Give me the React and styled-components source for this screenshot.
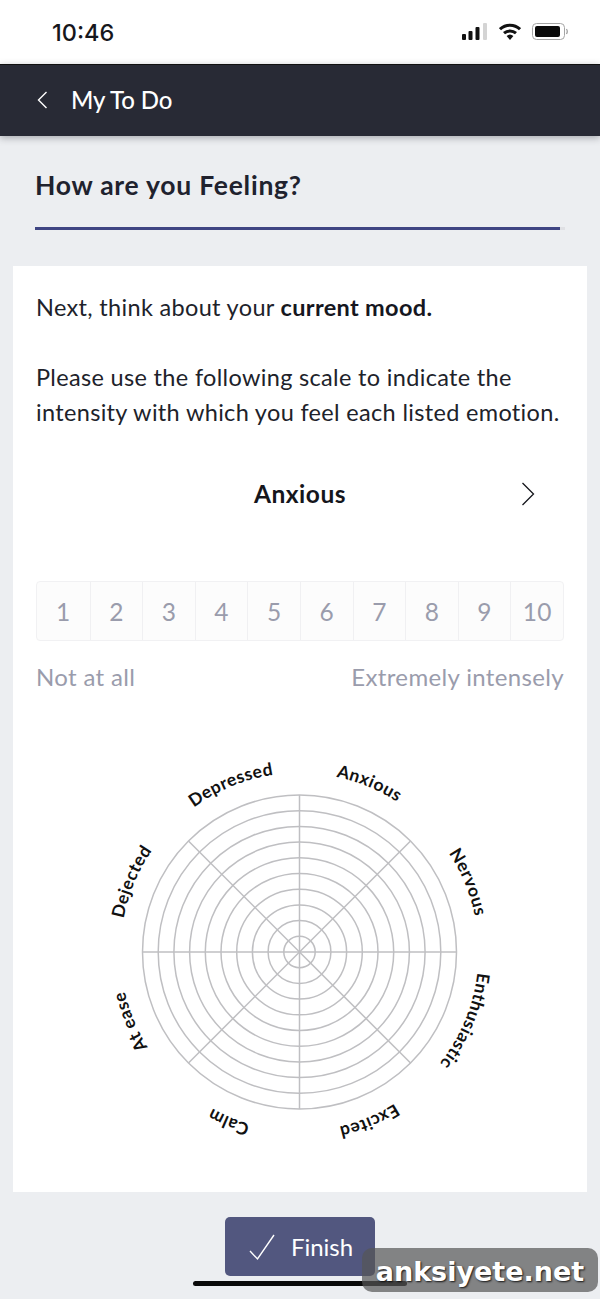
import React from "react";
import styled, { createGlobalStyle } from "styled-components";

const Global = createGlobalStyle`
  html, body { margin: 0; padding: 0; background: #eceef1; }
  body { font-family: "Lato", "Open Sans", sans-serif; }
`;

const Page = styled.div`
  position: relative;
  width: 600px;
  height: 1299px;
  overflow: hidden;
  background: #eceef1;
  display: flex;
  flex-direction: column;
`;
const StatusBar = styled.div`
  height: 64px;
  background: #fff;
  display: flex;
  align-items: center;
  justify-content: space-between;
  padding: 0 32px 0 52px;
  box-sizing: border-box;
`;
const Clock = styled.span`
  font-family: "Inter", sans-serif;
  font-size: 23.5px;
  font-weight: 500;
  color: #16171c;
`;
const StatusIcons = styled.div`
  display: flex;
  align-items: center;
  gap: 11px;
`;
const Header = styled.header`
  height: 72px;
  background: #282a35;
  box-shadow: 0 2px 7px rgba(40, 42, 53, 0.35);
  border-top: 1px solid #111;
  box-sizing: border-box;
  display: flex;
  align-items: center;
  gap: 20px;
  padding: 0 0 2px 35px;
  color: #fff;
  position: relative;
`;
const HeaderTitle = styled.span`
  font-size: 24px;
  font-weight: 500;
  letter-spacing: -0.1px;
`;
const TitleBlock = styled.div`
  padding: 33px 35px 0;
  height: 130px;
  box-sizing: border-box;
`;
const Title = styled.h1`
  margin: 0;
  font-size: 26.5px;
  line-height: 32px;
  font-weight: 700;
  letter-spacing: 0.75px;
  color: #20222e;
`;
const Track = styled.div`
  margin-top: 26px;
  width: 530px;
  height: 3px;
  background: #dfe0e4;
`;
const Fill = styled.div`
  height: 100%;
  background: #3f4583;
`;
const Card = styled.main`
  margin: 0 13px;
  height: 926px;
  background: #fff;
  box-sizing: border-box;
  padding: 24px 23px 0 23px;
  display: flex;
  flex-direction: column;
`;
const Para = styled.p`
  margin: 0 0 ${(p) => p.$after || 0}px;
  font-size: 23.5px;
  line-height: 35px;
  color: #20222a;
  letter-spacing: 0.33px;
  white-space: nowrap;
  strong { font-weight: 700; color: #16171f; }
`;
const EmotionRow = styled.div`
  margin-top: 41px;
  height: 44px;
  display: flex;
  align-items: center;
  justify-content: center;
  position: relative;
`;
const Emotion = styled.span`
  font-size: 24.5px;
  font-weight: 700;
  letter-spacing: 0.5px;
  color: #15161c;
`;
const NextBtn = styled.span`
  position: absolute;
  right: 28px;
  top: 10px;
  display: flex;
`;
const Scale = styled.div`
  margin-top: 66px;
  display: grid;
  grid-template-columns: repeat(10, 1fr);
  height: 60px;
  border: 1px solid #f1f1f3;
  border-radius: 4px;
  background: #fcfcfc;
  box-sizing: border-box;
`;
const Cell = styled.div`
  display: flex;
  align-items: center;
  justify-content: center;
  font-size: 24.5px;
  color: #9a9cac;
  letter-spacing: 0.3px;
  & + & { border-left: 1px solid #f0f0f2; }
`;
const ScaleLabels = styled.div`
  margin-top: 18px;
  display: flex;
  justify-content: space-between;
  font-size: 24px;
  line-height: 36px;
  color: #9a9cac;
  letter-spacing: 0.35px;
`;
const ChartWrap = styled.div`
  margin-top: 52px;
  display: flex;
  justify-content: center;
`;
const Footer = styled.div`
  margin-top: 25px;
  display: flex;
  justify-content: center;
`;
const FinishButton = styled.button`
  margin-right: 1px;
  width: 150px;
  height: 59px;
  border: 0;
  border-radius: 5px;
  background: #52577f;
  color: #fff;
  font-family: inherit;
  font-size: 24px;
  letter-spacing: 0;
  display: flex;
  align-items: center;
  justify-content: center;
  gap: 15px;
  padding: 0 0 0 2px;
`;
const HomeBar = styled.div`
  position: absolute;
  left: 193px;
  top: 1281px;
  width: 214px;
  height: 5px;
  border-radius: 3px;
  background: #0a0a0a;
`;
const Watermark = styled.div`
  position: absolute;
  left: 362px;
  top: 1248px;
  width: 236px;
  height: 44px;
  border-radius: 10px;
  background: rgba(85, 85, 85, 0.7);
  display: flex;
  align-items: center;
  justify-content: center;
  padding-top: 3px;
  box-sizing: border-box;
  font-family: "DejaVu Sans", sans-serif;
  font-weight: 700;
  font-size: 27px;
  color: #fff;
  text-shadow: 1px 1px 2px rgba(0, 0, 0, 0.85);
`;

const SignalWifiBattery = () => (
  <StatusIcons>
    <svg width="26" height="18" viewBox="0 0 26 18">
      <rect x="0" y="11" width="4" height="6" rx="1" fill="#111" />
      <rect x="6.5" y="8" width="4" height="9" rx="1" fill="#111" />
      <rect x="13.5" y="4" width="4" height="13" rx="1" fill="#111" />
      <rect x="21" y="0" width="4" height="17" rx="1" fill="#d4d4d4" />
    </svg>
    <svg width="22" height="18" viewBox="0 0 22 18">
      <path d="M1 6.2 A14.5 14.5 0 0 1 21 6.2" fill="none" stroke="#111" strokeWidth="3" />
      <path d="M5 10.2 A9 9 0 0 1 17 10.2" fill="none" stroke="#111" strokeWidth="3" />
      <path d="M7.6 13 A5 5 0 0 1 14.4 13 L11 17 Z" fill="#111" />
    </svg>
    <svg width="36" height="18" viewBox="0 0 36 18">
      <rect x="0.5" y="0.5" width="32" height="16" rx="4" fill="none" stroke="#a5a5a5" />
      <rect x="3" y="3" width="25" height="11" rx="2" fill="#0a0a0a" />
      <path d="M34.5 6 Q36 8.5 34.5 11" fill="none" stroke="#999" strokeWidth="1.2" />
    </svg>
  </StatusIcons>
);

const labels = ["Anxious", "Nervous", "Enthusiastic", "Excited", "Calm", "At ease", "Dejected", "Depressed"];
const C = 209.5;
const CY = 205;
const LABEL_R = 179;
const circumference = 2 * Math.PI * LABEL_R;
const rings = Array.from({ length: 10 }, (_, i) => 15.7 * (i + 1));
const spokes = Array.from({ length: 8 }, (_, i) => (i * Math.PI) / 4);

const Wheel = () => (
  <svg width="420" height="410" viewBox="0 0 420 410">
    <defs>
      <path
        id="labelCircle"
        d={`M ${C} ${CY - LABEL_R} A ${LABEL_R} ${LABEL_R} 0 1 1 ${C - 0.01} ${CY - LABEL_R} Z`}
      />
    </defs>
    {rings.map((r) => (
      <circle key={r} cx={C} cy={CY} r={r} fill="none" stroke="#bfbfc2" strokeWidth="1.5" />
    ))}
    {spokes.map((a) => (
      <line
        key={a}
        x1={C}
        y1={CY}
        x2={C + 157 * Math.sin(a)}
        y2={CY - 157 * Math.cos(a)}
        stroke="#bfbfc2"
        strokeWidth="1.5"
      />
    ))}
    {labels.map((l, i) => (
      <text
        key={l}
        fontFamily="Lato, sans-serif"
        fontWeight="700"
        fontSize="17.5"
        letterSpacing="0.5"
        fill="#111"
        textAnchor="middle"
      >
        <textPath href="#labelCircle" startOffset={((i + 0.5) / 8) * circumference}>
          {l}
        </textPath>
      </text>
    ))}
  </svg>
);

const nums = [1, 2, 3, 4, 5, 6, 7, 8, 9, 10];

export default function App() {
  return (
    <Page>
      <Global />
      <StatusBar>
        <Clock>10:46</Clock>
        <SignalWifiBattery />
      </StatusBar>
      <Header>
        <svg width="16" height="22" viewBox="0 0 16 22">
          <path d="M11.5 3 L3.5 11 L11.5 19" fill="none" stroke="#fff" strokeWidth="1.4" />
        </svg>
        <HeaderTitle>My To Do</HeaderTitle>
      </Header>
      <TitleBlock>
        <Title>How are you Feeling?</Title>
        <Track>
          <Fill style={{ width: "99%" }} />
        </Track>
      </TitleBlock>
      <Card>
        <Para $after={35}>
          Next, think about your <strong>current mood.</strong>
        </Para>
        <Para>Please use the following scale to indicate the</Para>
        <Para>intensity with which you feel each listed emotion.</Para>
        <EmotionRow>
          <Emotion>Anxious</Emotion>
          <NextBtn>
            <svg width="16" height="26" viewBox="0 0 16 26">
              <path d="M2.5 2 L13.5 13 L2.5 24" fill="none" stroke="#15161c" strokeWidth="1.3" />
            </svg>
          </NextBtn>
        </EmotionRow>
        <Scale>
          {nums.map((n) => (
            <Cell key={n}>{n}</Cell>
          ))}
        </Scale>
        <ScaleLabels>
          <span>Not at all</span>
          <span>Extremely intensely</span>
        </ScaleLabels>
        <ChartWrap>
          <Wheel />
        </ChartWrap>
      </Card>
      <Footer>
        <FinishButton>
          <svg width="28" height="30" viewBox="0 0 28 30">
            <path d="M2 19 L9.5 27 L26 3" fill="none" stroke="#fff" strokeWidth="1.4" />
          </svg>
          <span>Finish</span>
        </FinishButton>
      </Footer>
      <HomeBar />
      <Watermark>anksiyete.net</Watermark>
    </Page>
  );
}
